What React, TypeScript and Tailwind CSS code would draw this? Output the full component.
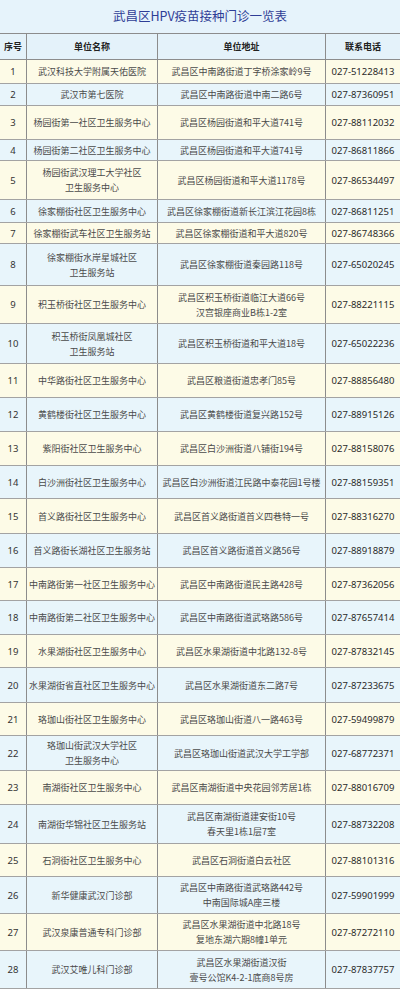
import React from "react";

type Row = { n: number; name: string[]; addr: string[]; tel: string; h: string };

const rows: Row[] = [
  { n: 1, name: ["武汉科技大学附属天佑医院"], addr: ["武昌区中南路街道丁字桥涂家岭9号"], tel: "027-51228413", h: "h-[24px]" },
  { n: 2, name: ["武汉市第七医院"], addr: ["武昌区中南路街道中南二路6号"], tel: "027-87360951", h: "h-[22px]" },
  { n: 3, name: ["杨园街第一社区卫生服务中心"], addr: ["武昌区杨园街道和平大道741号"], tel: "027-88112032", h: "h-[34px]" },
  { n: 4, name: ["杨园街第二社区卫生服务中心"], addr: ["武昌区杨园街道和平大道741号"], tel: "027-86811866", h: "h-[21px]" },
  { n: 5, name: ["杨园街武汉理工大学社区", "卫生服务中心"], addr: ["武昌区杨园街道和平大道1178号"], tel: "027-86534497", h: "h-[39px]" },
  { n: 6, name: ["徐家棚街社区卫生服务中心"], addr: ["武昌区徐家棚街道新长江滨江花园8栋"], tel: "027-86811251", h: "h-[23px]" },
  { n: 7, name: ["徐家棚街武车社区卫生服务站"], addr: ["武昌区徐家棚街道和平大道820号"], tel: "027-86748366", h: "h-[21px]" },
  { n: 8, name: ["徐家棚街水岸星城社区", "卫生服务站"], addr: ["武昌区徐家棚街道秦园路118号"], tel: "027-65020245", h: "h-[42px]" },
  { n: 9, name: ["积玉桥街社区卫生服务中心"], addr: ["武昌区积玉桥街道临江大道66号", "汉宫银座商业B栋1-2室"], tel: "027-88221115", h: "h-[38px]" },
  { n: 10, name: ["积玉桥街凤凰城社区", "卫生服务站"], addr: ["武昌区积玉桥街道和平大道18号"], tel: "027-65022236", h: "h-[40px]" },
  { n: 11, name: ["中华路街社区卫生服务中心"], addr: ["武昌区粮道街道忠孝门85号"], tel: "027-88856480", h: "h-[34px]" },
  { n: 12, name: ["黄鹤楼街社区卫生服务中心"], addr: ["武昌区黄鹤楼街道复兴路152号"], tel: "027-88915126", h: "h-[34px]" },
  { n: 13, name: ["紫阳街社区卫生服务中心"], addr: ["武昌区白沙洲街道八铺街194号"], tel: "027-88158076", h: "h-[34px]" },
  { n: 14, name: ["白沙洲街社区卫生服务中心"], addr: ["武昌区白沙洲街道江民路中泰花园1号楼"], tel: "027-88159351", h: "h-[33px]" },
  { n: 15, name: ["首义路街社区卫生服务中心"], addr: ["武昌区首义路街道首义四巷特一号"], tel: "027-88316270", h: "h-[35px]" },
  { n: 16, name: ["首义路街长湖社区卫生服务站"], addr: ["武昌区首义路街道首义路56号"], tel: "027-88918879", h: "h-[34px]" },
  { n: 17, name: ["中南路街第一社区卫生服务中心"], addr: ["武昌区中南路街道民主路428号"], tel: "027-87362056", h: "h-[33px]" },
  { n: 18, name: ["中南路街第二社区卫生服务中心"], addr: ["武昌区中南路街道武珞路586号"], tel: "027-87657414", h: "h-[34px]" },
  { n: 19, name: ["水果湖街社区卫生服务中心"], addr: ["武昌区水果湖街道中北路132-8号"], tel: "027-87832145", h: "h-[33px]" },
  { n: 20, name: ["水果湖街省直社区卫生服务中心"], addr: ["武昌区水果湖街道东二路7号"], tel: "027-87233675", h: "h-[35px]" },
  { n: 21, name: ["珞珈山街社区卫生服务中心"], addr: ["武昌区珞珈山街道八一路463号"], tel: "027-59499879", h: "h-[33px]" },
  { n: 22, name: ["珞珈山街武汉大学社区", "卫生服务中心"], addr: ["武昌区珞珈山街道武汉大学工学部"], tel: "027-68772371", h: "h-[35px]" },
  { n: 23, name: ["南湖街社区卫生服务中心"], addr: ["武昌区南湖街道中央花园邻芳居1栋"], tel: "027-88016709", h: "h-[34px]" },
  { n: 24, name: ["南湖街华锦社区卫生服务站"], addr: ["武昌区南湖街道建安街10号", "春天里1栋1层7室"], tel: "027-88732208", h: "h-[39px]" },
  { n: 25, name: ["石洞街社区卫生服务中心"], addr: ["武昌区石洞街道白云社区"], tel: "027-88101316", h: "h-[33px]" },
  { n: 26, name: ["新华健康武汉门诊部"], addr: ["武昌区中南路街道武珞路442号", "中南国际城A座三楼"], tel: "027-59901999", h: "h-[37px]" },
  { n: 27, name: ["武汉泉康普通专科门诊部"], addr: ["武昌区水果湖街道中北路18号", "复地东湖六期8幢1单元"], tel: "027-87272110", h: "h-[37px]" },
  { n: 28, name: ["武汉艾唯儿科门诊部"], addr: ["武昌区水果湖街道汉街", "壹号公馆K4-2-1底商8号房"], tel: "027-87837757", h: "h-[38px]" },
];

const cols = "grid grid-cols-[27px_131px_168px_74px]";

export default function App() {
  return (
    <div className="w-[400px] h-[991px] bg-white overflow-hidden font-['Noto_Sans_CJK_SC','Noto_Sans',sans-serif] text-[#4a4a4a]">
      <div className="h-[33px] bg-[#e6f3fb] flex items-center justify-center text-[12.5px] text-[#2f3d96] leading-none">
        武昌区HPV疫苗接种门诊一览表
      </div>
      <div className={`${cols} h-[27px] bg-[#e4f2fa] border-t border-b border-[#8c8c8c] text-[9px] font-bold text-[#222]`}>
        <div className="flex items-center justify-center border-r border-[#8c8c8c]">序号</div>
        <div className="flex items-center justify-center border-r border-[#8c8c8c]">单位名称</div>
        <div className="flex items-center justify-center border-r border-[#8c8c8c]">单位地址</div>
        <div className="flex items-center justify-center">联系电话</div>
      </div>
      {rows.map((r) => (
        <div
          key={r.n}
          className={`${cols} ${r.h} border-b border-[#a3a3a3] ${r.n % 2 === 1 ? "bg-[#fdfbe7]" : "bg-[#e8f5fb]"} text-[9px] leading-[15px]`}
        >
          <div className="flex items-center justify-center border-r border-[#8c8c8c] text-[#333] font-['Noto_Sans',sans-serif] text-[9.5px]">
            {r.n}
          </div>
          <div className="flex flex-col items-center justify-center border-r border-[#8c8c8c] whitespace-nowrap">
            {r.name.map((t, i) => (
              <span key={i}>{t}</span>
            ))}
          </div>
          <div className="flex flex-col items-center justify-center border-r border-[#8c8c8c] whitespace-nowrap">
            {r.addr.map((t, i) => (
              <span key={i}>{t}</span>
            ))}
          </div>
          <div className="flex items-center justify-center text-[#2a2a2a] text-[9.5px] font-['Noto_Sans',sans-serif] whitespace-nowrap">
            {r.tel}
          </div>
        </div>
      ))}
    </div>
  );
}
